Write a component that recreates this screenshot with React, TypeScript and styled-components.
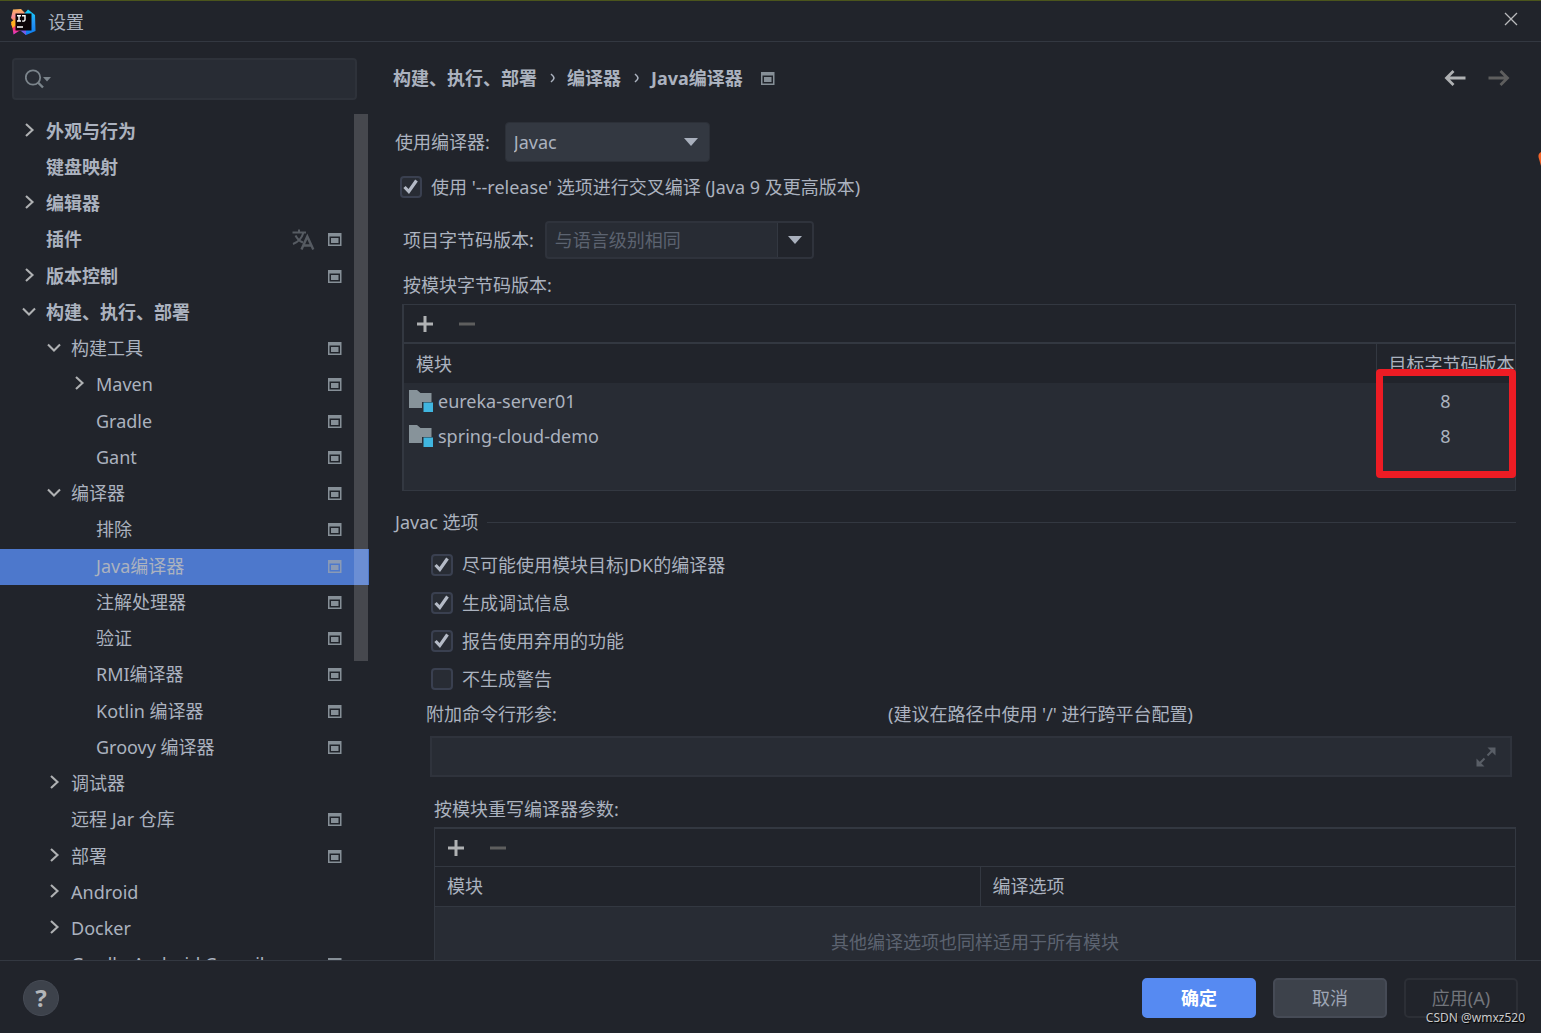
import React, { useState } from "react";
import styled, { createGlobalStyle } from "styled-components";

const color = {
  bg: "#21242b",
  field: "#282c34",
  raised: "#333841",
  line: "#333841",
  text: "#abb2bf",
  muted: "#5c6370",
  icon: "#868f97",
  glyph: "#afb1b3",
  glyphOff: "#5e5e5e",
  selection: "#4d78cc",
  primary: "#568af2",
};

const GlobalStyle = createGlobalStyle`
  *, *::before, *::after { box-sizing: border-box; }
  body { margin: 0; background: ${color.bg}; }
  body, button, input, select {
    color: ${color.text};
    font-family: "Noto Sans", "Noto Sans CJK SC", sans-serif;
    font-size: 18px;
    line-height: 24px;
  }
  button { padding: 0; border: 0; background: none; cursor: pointer; }
`;

/* ---------- window ---------- */

const Window = styled.div`
  position: relative;
  display: flex;
  flex-direction: column;
  height: 100vh;
  overflow: hidden;
  border-top: 1px solid #4b551c;
`;

const TitleBar = styled.header`
  display: flex;
  align-items: center;
  gap: 12px;
  flex: none;
  height: 41px;
  padding: 2px 22px 0 10px;
  border-bottom: 1px solid ${color.line};
`;

const Title = styled.h1`
  flex: 1;
  margin: 0;
  font-size: 18px;
  font-weight: 400;
`;

const IconButton = styled.button`
  display: grid;
  place-items: center;
  width: 24px;
  height: 24px;
`;

const CloseButton = styled(IconButton)`
  width: 16px;
  margin-bottom: 6px;
`;

const Body = styled.div`
  display: grid;
  grid-template-columns: 369px minmax(0, 1fr);
  flex: 1;
  min-height: 0;
`;

/* ---------- sidebar ---------- */

const Sidebar = styled.nav`
  display: flex;
  flex-direction: column;
  gap: 14px;
  min-height: 0;
  padding-top: 16px;
`;

const SearchBox = styled.label`
  display: flex;
  align-items: center;
  flex: none;
  gap: 6px;
  height: 42px;
  margin: 0 12px;
  padding-left: 11px;
  border: 2px solid #2e323a;
  border-radius: 4px;
  background: ${color.field};
`;

const SearchInput = styled.input`
  flex: 1;
  min-width: 0;
  border: 0;
  outline: 0;
  background: none;
`;

const TreeArea = styled.div`
  position: relative;
  flex: 1;
  min-height: 0;
  overflow: hidden;
`;

const Tree = styled.ul`
  margin: 0;
  padding: 0;
  list-style: none;
`;

const TreeItem = styled.li`
  &:nth-child(4n) { padding-bottom: 1px; }
`;

const TreeRow = styled.button<{ $depth: number; $selected: boolean }>`
  display: flex;
  align-items: center;
  gap: 8px;
  width: 100%;
  height: 36px;
  padding: 0 27px 2px ${(p) => 20 + p.$depth * 25}px;
  background: ${(p) => (p.$selected ? color.selection : "none")};
  font-weight: ${(p) => (p.$depth === 0 ? 700 : 400)};
  text-align: left;
  white-space: nowrap;
`;

const Twisty = styled.span`
  display: grid;
  flex: none;
  place-items: center;
  width: 18px;
  height: 20px;
`;

const TreeLabel = styled.span`
  flex: 1;
`;

const TreeIcons = styled.span`
  display: flex;
  align-items: center;
  gap: 13px;
`;

const ScrollThumb = styled.div`
  position: absolute;
  top: 0;
  right: 1px;
  width: 14px;
  height: 547px;
  background: rgba(255, 255, 255, 0.17);
`;

/* ---------- content ---------- */

const Content = styled.main`
  display: flex;
  flex-direction: column;
  min-height: 0;
  padding: 16px 25px 0 24px;
  overflow: hidden;
`;

const Row = styled.div`
  display: flex;
  align-items: center;
  flex: none;
`;

const PageHeader = styled(Row)`
  gap: 18px;
  height: 40px;
  padding-right: 5px;
`;

const Crumbs = styled.ol`
  display: flex;
  align-items: center;
  gap: 13px;
  margin: 0;
  padding: 0;
  list-style: none;
  font-weight: 700;
`;

const Crumb = styled.li`
  display: flex;
  align-items: center;
  gap: 12px;
`;

const History = styled.div`
  display: flex;
  gap: 20px;
  margin-left: auto;
`;

const CompilerRow = styled(Row)`
  gap: 15px;
  height: 40px;
  margin: 24px 0 0 2px;
`;

const SelectWrap = styled.span`
  position: relative;
  display: flex;
  align-items: center;
`;

const Select = styled.select`
  appearance: none;
  width: 205px;
  height: 40px;
  padding: 0 8px;
  border: 1px solid #2c3038;
  border-radius: 4px;
  background: ${color.raised};
`;

const SelectArrow = styled.svg`
  position: absolute;
  right: 12px;
  pointer-events: none;
`;

const Check = styled.label`
  display: flex;
  align-items: center;
  gap: 8px;
  height: 24px;
`;

const CheckInput = styled.input`
  appearance: none;
  width: 22px;
  height: 22px;
  margin: 0 1px;
  border: 2px solid #3a4050;
  border-radius: 4px;
  background: ${color.field};
`;

const CheckBoxWrap = styled.span`
  position: relative;
  display: flex;
`;

const CheckMark = styled.svg`
  position: absolute;
  top: 3px;
  left: 4px;
  pointer-events: none;
`;

const ReleaseRow = styled(Row)`
  margin: 13px 0 0 6px;
`;

const Section = styled.section`
  display: flex;
  flex-direction: column;
  flex: none;
  margin: 22px 0 0 9px;
`;

const BytecodeRow = styled(Row)`
  gap: 11px;
  padding-left: 1px;
`;

const Combo = styled.span`
  display: flex;
  width: 269px;
  height: 38px;
  overflow: hidden;
  border: 2px solid #2f333c;
  border-radius: 4px;
  background: ${color.field};
`;

const ComboInput = styled.input`
  flex: 1;
  min-width: 0;
  padding: 0 8px;
  border: 0;
  outline: 0;
  background: none;
  &::placeholder { color: ${color.muted}; opacity: 1; }
`;

const ComboButton = styled.button`
  display: grid;
  place-items: center;
  width: 35px;
  border-left: 1px solid #333841;
  background: ${color.bg};
`;

const Caption = styled.div`
  margin: 14px 0 7px 1px;
`;

const Panel = styled.div`
  position: relative;
  flex: none;
  border: 1px solid ${color.line};
  background: ${color.field};
`;

const BytecodePanel = styled(Panel)`
  height: 187px;
  border-left-width: 2px;
`;

const OptionsPanel = styled(Panel)`
  height: 240px;
  margin-left: 4px;
  border-top-width: 2px;
`;

const Toolbar = styled(Row)<{ $line: number }>`
  gap: 18px;
  height: ${(p) => 37 + p.$line}px;
  padding-left: 9px;
  border-bottom: ${(p) => p.$line}px solid ${color.line};
  background: ${color.bg};
`;

const Table = styled.table`
  width: 100%;
  table-layout: fixed;
  border-collapse: collapse;
`;

const Col = styled.col<{ $width?: number }>`
  width: ${(p) => (p.$width ? `${p.$width}px` : "auto")};
`;

const HeadCell = styled.th<{ $divided?: boolean; $underlined?: boolean }>`
  height: 39px;
  padding: 0 0 0 12px;
  overflow: hidden;
  border-left: ${(p) => (p.$divided ? `1px solid ${color.line}` : "0")};
  border-bottom: ${(p) => (p.$underlined ? `1px solid ${color.line}` : "0")};
  background: ${color.bg};
  font-weight: 400;
  text-align: left;
  white-space: nowrap;
`;

const ModuleCell = styled.td`
  height: 35px;
  padding: 0 5px;
`;

const ModuleName = styled.span`
  display: flex;
  align-items: center;
  gap: 5px;
`;

const TargetCell = styled.td`
  padding: 0;
  text-align: center;
`;

const EmptyCell = styled.td`
  height: 72px;
  padding: 0;
  color: ${color.muted};
  text-align: center;
`;

const Highlight = styled.div`
  position: absolute;
  top: 64px;
  right: -1px;
  width: 140px;
  height: 109px;
  border: 7px solid #ed1c24;
  border-radius: 4px;
  pointer-events: none;
`;

const GroupTitle = styled.h2`
  display: flex;
  align-items: center;
  gap: 8px;
  flex: none;
  margin: 19px 0 0 2px;
  font-size: 18px;
  font-weight: 400;
  &::after {
    flex: 1;
    height: 1px;
    background: ${color.line};
    content: "";
  }
`;

const Group = styled.section`
  display: flex;
  flex-direction: column;
  flex: none;
  margin: 19px 0 0 37px;
`;

const CheckList = styled.div`
  display: flex;
  flex-direction: column;
  gap: 14px;
  margin-bottom: 11px;
`;

const ParamHead = styled.div`
  display: grid;
  grid-template-columns: 462px 1fr;
  margin: 0 0 10px -4px;
`;

const ParamField = styled.div`
  display: flex;
  align-items: center;
  height: 41px;
  margin-right: 4px;
  padding-right: 12px;
  border: 2px solid #2f333c;
  background: ${color.field};
`;

const ParamInput = styled.input`
  flex: 1;
  min-width: 0;
  border: 0;
  outline: 0;
  background: none;
`;

const OverrideCaption = styled.div`
  margin: 20px 0 6px 4px;
`;

/* ---------- footer ---------- */

const Footer = styled.footer`
  display: flex;
  align-items: center;
  gap: 17px;
  flex: none;
  height: 73px;
  padding: 2px 23px 0;
  border-top: 1px solid ${color.line};
`;

const HelpButton = styled.button`
  width: 36px;
  height: 36px;
  margin-right: auto;
  border: 1px solid #464b55;
  border-radius: 50%;
  background: #3d424b;
  color: #b4b6b9;
  font-size: 24px;
  font-weight: 700;
`;

const DialogButton = styled.button<{ $kind: "primary" | "normal" | "disabled" }>`
  width: 114px;
  height: 40px;
  border: 2px solid
    ${(p) => ({ primary: color.primary, normal: "#464b56", disabled: "#2c2f36" })[p.$kind]};
  border-radius: 5px;
  background: ${(p) => ({ primary: color.primary, normal: "#3d424b", disabled: "none" })[p.$kind]};
  color: ${(p) => ({ primary: "#ffffff", normal: "#9da5b4", disabled: "#72757b" })[p.$kind]};
  font-weight: ${(p) => (p.$kind === "primary" ? 700 : 400)};
`;

const Watermark = styled.span`
  position: absolute;
  right: 16px;
  bottom: 6px;
  color: #c9cacc;
  font-size: 12px;
  line-height: 18px;
  text-shadow: 1px 1px 1px #000;
  pointer-events: none;
`;

const EdgeMark = styled.svg`
  position: absolute;
  top: 151px;
  right: 0;
`;

/* ---------- icons ---------- */

const Logo = () => (
  <svg width="26" height="26" viewBox="0 0 26 26" aria-hidden="true">
    <defs>
      <linearGradient id="warm" x1="0" y1="0" x2="0" y2="1">
        <stop offset="0" stopColor="#fdb35a" />
        <stop offset="0.3" stopColor="#f98a9a" />
        <stop offset="0.55" stopColor="#fb8a1e" />
        <stop offset="0.75" stopColor="#f8356c" />
        <stop offset="1" stopColor="#e03ad0" />
      </linearGradient>
      <linearGradient id="cool" x1="0" y1="0" x2="0" y2="1">
        <stop offset="0" stopColor="#12d5fb" />
        <stop offset="0.5" stopColor="#2596f5" />
        <stop offset="1" stopColor="#0c7cf0" />
      </linearGradient>
    </defs>
    <path d="M3 0.500 11 0 16 5V21L9 22 3.500 25.500 2.500 19 1 15 4 12 1 9Z" fill="url(#warm)" />
    <path d="M1 13 4.500 10.500 6 16 2.500 19Z" fill="#ffb21f" />
    <path d="M14 5 18 0.500 25 6 25.500 22 16 26 10 21Z" fill="url(#cool)" />
    <path d="M10 21 16 21 16 26Z" fill="#7a5be8" />
    <rect x="5.500" y="4.500" width="16" height="17" fill="#0b0408" />
    <path
      d="M7 6.800h4M9 6.800v5M7 12h4M12 6.800H15V10.500q0 2-2.800 1.500M7 18h6"
      fill="none"
      stroke="#fff"
      strokeWidth="1.400"
    />
  </svg>
);

const CloseIcon = () => (
  <svg width="14" height="14" viewBox="0 0 14 14" aria-hidden="true">
    <path d="M1 1 13 13M13 1 1 13" stroke="#b9babc" strokeWidth="1.300" />
  </svg>
);

const SearchIcon = () => (
  <svg width="26" height="20" viewBox="0 0 26 20" aria-hidden="true">
    <circle cx="8" cy="8.500" r="7.200" fill="none" stroke="#7b848b" strokeWidth="1.800" />
    <path d="M13 13.500 18 18.500" stroke="#7b848b" strokeWidth="2.400" />
    <path d="M18 8h8L22 12.500Z" fill="#7b848b" />
  </svg>
);

const ChevronIcon = ({ open }: { open: boolean }) => (
  <svg width="14" height="16" viewBox="0 0 14 16" aria-hidden="true">
    <path
      d={open ? "M1 4.500 7 10.500 13 4.500" : "M4 1 10.500 7 4 13"}
      fill="none"
      stroke={color.glyph}
      strokeWidth="2.100"
    />
  </svg>
);

const ProjectIcon = ({ on = false }: { on?: boolean }) => {
  const fill = on ? "#8a9ab5" : color.icon;
  return (
    <svg width="14" height="13" viewBox="0 0 14 13" aria-hidden="true">
      <path d="M0 0h13.500v13H0ZM1.500 3.500v8h10.500v-8Z" fill={fill} fillRule="evenodd" />
      <rect x="3" y="5" width="7.500" height="5" fill={fill} />
    </svg>
  );
};

const TranslateIcon = () => (
  <svg width="23" height="21" viewBox="0 0 23 21" aria-hidden="true">
    <g fill="none" stroke="#565b62" strokeWidth="2">
      <path d="M0.500 3.500H14M7 0.500V3.500M3.500 6.500Q6 11.500 11 13.500M11.500 3.500Q9 12 1 15" />
      <path d="M9.500 20.500 15.300 7.500 21.300 20.500M11.800 16.500H19" strokeWidth="2.400" />
    </g>
  </svg>
);

const TriangleShape = () => <path d="M0 0h14L7 8Z" fill="#a9b0bd" />;

const CrumbArrow = () => (
  <svg width="5" height="10" viewBox="0 0 5 10" aria-hidden="true">
    <path d="M1 1Q4 3.500 4 5Q4 6.500 1 9" fill="none" stroke={color.text} strokeWidth="1.600" />
  </svg>
);

const ArrowIcon = ({ forward = false }: { forward?: boolean }) => (
  <svg width="22" height="16" viewBox="0 0 22 16" aria-hidden="true">
    <path
      d={forward ? "M0.500 8H19.500M12.500 1 19.500 8 12.500 15" : "M21.500 8H2.500M9.500 1 2.500 8 9.500 15"}
      fill="none"
      stroke={forward ? color.glyphOff : color.glyph}
      strokeWidth="2.800"
    />
  </svg>
);

const PlusIcon = () => (
  <svg width="16" height="16" viewBox="0 0 16 16" aria-hidden="true">
    <path d="M0 8H16M8 0V16" stroke={color.glyph} strokeWidth="3" />
  </svg>
);

const MinusIcon = () => (
  <svg width="16" height="16" viewBox="0 0 16 16" aria-hidden="true">
    <path d="M0 8H16" stroke={color.glyphOff} strokeWidth="3" />
  </svg>
);

const FolderIcon = () => (
  <svg width="24" height="22" viewBox="0 0 24 22" aria-hidden="true">
    <path d="M0 0H8L11.500 3H22.500V12H13V18H0Z" fill="#87939a" />
    <rect x="14.500" y="12.500" width="9.500" height="9.500" fill="#40b6e0" />
  </svg>
);

const ExpandIcon = () => (
  <svg width="20" height="20" viewBox="0 0 20 20" fill="#595e66" aria-hidden="true">
    <path d="M11.500 0.500H19.500V8.500ZM0.500 11.500 8.500 19.500H0.500Z" />
    <path d="M11.500 8.500 16 4M4 16 8.500 11.500" stroke="#595e66" strokeWidth="2" />
  </svg>
);

/* ---------- data ---------- */

type Node = {
  label: string;
  depth: number;
  open?: boolean;
  project?: boolean;
  translate?: boolean;
};

const nodes: Node[] = [
  { label: "外观与行为", depth: 0, open: false },
  { label: "键盘映射", depth: 0 },
  { label: "编辑器", depth: 0, open: false },
  { label: "插件", depth: 0, project: true, translate: true },
  { label: "版本控制", depth: 0, open: false, project: true },
  { label: "构建、执行、部署", depth: 0, open: true },
  { label: "构建工具", depth: 1, open: true, project: true },
  { label: "Maven", depth: 2, open: false, project: true },
  { label: "Gradle", depth: 2, project: true },
  { label: "Gant", depth: 2, project: true },
  { label: "编译器", depth: 1, open: true, project: true },
  { label: "排除", depth: 2, project: true },
  { label: "Java编译器", depth: 2, project: true },
  { label: "注解处理器", depth: 2, project: true },
  { label: "验证", depth: 2, project: true },
  { label: "RMI编译器", depth: 2, project: true },
  { label: "Kotlin 编译器", depth: 2, project: true },
  { label: "Groovy 编译器", depth: 2, project: true },
  { label: "调试器", depth: 1, open: false },
  { label: "远程 Jar 仓库", depth: 1, project: true },
  { label: "部署", depth: 1, open: false, project: true },
  { label: "Android", depth: 1, open: false },
  { label: "Docker", depth: 1, open: false },
  { label: "Gradle-Android Compiler", depth: 1, project: true },
];

const modules = [
  { name: "eureka-server01", target: "8" },
  { name: "spring-cloud-demo", target: "8" },
];

const options = [
  { label: "尽可能使用模块目标JDK的编译器", on: true },
  { label: "生成调试信息", on: true },
  { label: "报告使用弃用的功能", on: true },
  { label: "不生成警告", on: false },
];

/* ---------- components ---------- */

function CheckBox({ label, initial }: { label: string; initial: boolean }) {
  const [on, setOn] = useState(initial);
  return (
    <Check>
      <CheckBoxWrap>
        <CheckInput type="checkbox" checked={on} onChange={() => setOn(!on)} />
        {on && (
          <CheckMark width="16" height="16" viewBox="0 0 16 16" aria-hidden="true">
            <path d="M1.500 8 5.800 12.500 13.500 1.500" fill="none" stroke="#b4bac6" strokeWidth="3.200" />
          </CheckMark>
        )}
      </CheckBoxWrap>
      {label}
    </Check>
  );
}

function EditToolbar({ line }: { line: number }) {
  return (
    <Toolbar $line={line}>
      <IconButton aria-label="添加"><PlusIcon /></IconButton>
      <IconButton aria-label="移除" disabled><MinusIcon /></IconButton>
    </Toolbar>
  );
}

function SettingsTree() {
  const [selected, setSelected] = useState("Java编译器");
  return (
    <TreeArea>
      <Tree>
        {nodes.map((n) => (
          <TreeItem key={n.label}>
            <TreeRow
              $depth={n.depth}
              $selected={n.label === selected}
              onClick={() => setSelected(n.label)}
            >
              <Twisty>{n.open !== undefined && <ChevronIcon open={n.open} />}</Twisty>
              <TreeLabel>{n.label}</TreeLabel>
              <TreeIcons>
                {n.translate && <TranslateIcon />}
                {n.project && <ProjectIcon on={n.label === selected} />}
              </TreeIcons>
            </TreeRow>
          </TreeItem>
        ))}
      </Tree>
      <ScrollThumb />
    </TreeArea>
  );
}

export default function App() {
  return (
    <>
      <GlobalStyle />
      <Window>
        <TitleBar>
          <Logo />
          <Title>设置</Title>
          <CloseButton aria-label="关闭"><CloseIcon /></CloseButton>
        </TitleBar>

        <Body>
          <Sidebar>
            <SearchBox>
              <SearchIcon />
              <SearchInput type="text" aria-label="搜索" />
            </SearchBox>
            <SettingsTree />
          </Sidebar>

          <Content>
            <PageHeader>
              <Crumbs>
                <Crumb>构建、执行、部署</Crumb>
                <Crumb><CrumbArrow />编译器</Crumb>
                <Crumb><CrumbArrow />Java编译器</Crumb>
              </Crumbs>
              <ProjectIcon />
              <History>
                <IconButton aria-label="后退"><ArrowIcon /></IconButton>
                <IconButton aria-label="前进" disabled><ArrowIcon forward /></IconButton>
              </History>
            </PageHeader>

            <CompilerRow>
              <label htmlFor="compiler">使用编译器:</label>
              <SelectWrap>
                <Select id="compiler" defaultValue="Javac">
                  <option>Javac</option>
                  <option>Eclipse</option>
                </Select>
                <SelectArrow width="14" height="8" viewBox="0 0 14 8"><TriangleShape /></SelectArrow>
              </SelectWrap>
            </CompilerRow>

            <ReleaseRow>
              <CheckBox label="使用 '--release' 选项进行交叉编译 (Java 9 及更高版本)" initial />
            </ReleaseRow>

            <Section>
              <BytecodeRow>
                <label htmlFor="bytecode">项目字节码版本:</label>
                <Combo>
                  <ComboInput id="bytecode" type="text" placeholder="与语言级别相同" />
                  <ComboButton aria-label="展开">
                    <svg width="14" height="8" viewBox="0 0 14 8"><TriangleShape /></svg>
                  </ComboButton>
                </Combo>
              </BytecodeRow>
              <Caption>按模块字节码版本:</Caption>
              <BytecodePanel>
                <EditToolbar line={2} />
                <Table>
                  <colgroup><Col /><Col $width={139} /></colgroup>
                  <thead>
                    <tr>
                      <HeadCell>模块</HeadCell>
                      <HeadCell $divided>目标字节码版本</HeadCell>
                    </tr>
                  </thead>
                  <tbody>
                    {modules.map((m) => (
                      <tr key={m.name}>
                        <ModuleCell><ModuleName><FolderIcon />{m.name}</ModuleName></ModuleCell>
                        <TargetCell>{m.target}</TargetCell>
                      </tr>
                    ))}
                  </tbody>
                </Table>
                <Highlight />
              </BytecodePanel>
            </Section>

            <GroupTitle>Javac 选项</GroupTitle>
            <Group>
              <CheckList>
                {options.map((o) => <CheckBox key={o.label} label={o.label} initial={o.on} />)}
              </CheckList>
              <ParamHead>
                <label htmlFor="params">附加命令行形参:</label>
                <span>(建议在路径中使用 '/' 进行跨平台配置)</span>
              </ParamHead>
              <ParamField>
                <ParamInput id="params" type="text" />
                <IconButton aria-label="展开输入框"><ExpandIcon /></IconButton>
              </ParamField>
              <OverrideCaption>按模块重写编译器参数:</OverrideCaption>
              <OptionsPanel>
                <EditToolbar line={1} />
                <Table>
                  <colgroup><Col $width={545} /><Col /></colgroup>
                  <thead>
                    <tr>
                      <HeadCell $underlined>模块</HeadCell>
                      <HeadCell $divided $underlined>编译选项</HeadCell>
                    </tr>
                  </thead>
                  <tbody>
                    <tr><EmptyCell colSpan={2}>其他编译选项也同样适用于所有模块</EmptyCell></tr>
                  </tbody>
                </Table>
              </OptionsPanel>
            </Group>
          </Content>
        </Body>

        <Footer>
          <HelpButton aria-label="帮助">?</HelpButton>
          <DialogButton $kind="primary">确定</DialogButton>
          <DialogButton $kind="normal">取消</DialogButton>
          <DialogButton $kind="disabled" disabled>应用(A)</DialogButton>
        </Footer>

        <Watermark>CSDN @wmxz520</Watermark>
        <EdgeMark width="3" height="15" viewBox="0 0 3 15" aria-hidden="true">
          <path d="M3 0Q0 1.500 0.500 5L3 14Z" fill="#f4652a" />
        </EdgeMark>
      </Window>
    </>
  );
}
